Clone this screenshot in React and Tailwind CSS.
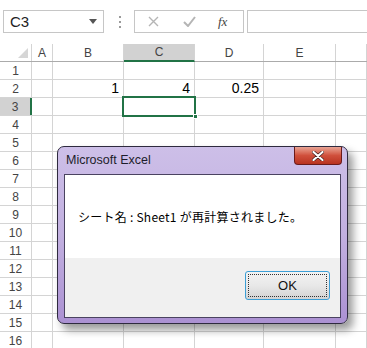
import React from 'react'

const COLS = [
  { name: 'A', w: 'w-[21px]' },
  { name: 'B', w: 'w-[71px]' },
  { name: 'C', w: 'w-[71px]' },
  { name: 'D', w: 'w-[69px]' },
  { name: 'E', w: 'w-[72px]' },
  { name: '', w: 'flex-1' },
]

const DATA = { 2: { B: '1', C: '4', D: '0.25' } }

const ROWS = Array.from({ length: 16 }, (_, i) => i + 1)

const FormulaBar = () => (
  <div className="relative h-[44px] flex items-start pt-[10px] pl-[3px]">
    <div className="w-[101px] h-[23px] border border-[#c6c6c6] flex items-center justify-between pl-[6px] pr-[6px]">
      <span className="text-[15px] text-[#222] leading-none">C3</span>
      <svg width="8" height="5" viewBox="0 0 8 5"><path d="M0 0h8L4 5z" fill="#555" /></svg>
    </div>
    <div className="ml-[15px] mt-[6px] flex flex-col gap-[3px]">
      <span className="w-[2px] h-[2px] bg-[#9a9a9a]" />
      <span className="w-[2px] h-[2px] bg-[#9a9a9a]" />
      <span className="w-[2px] h-[2px] bg-[#9a9a9a]" />
    </div>
    <div className="ml-[13px] w-[110px] h-[23px] border border-[#c6c6c6] flex items-center">
      <svg className="ml-[13px]" width="11" height="11" viewBox="0 0 11 11">
        <path d="M1 1L10 10M10 1L1 10" stroke="#b5b5b5" strokeWidth="1.4" />
      </svg>
      <svg className="ml-[24px]" width="13" height="11" viewBox="0 0 13 11">
        <path d="M1 6L5 10L12 1" stroke="#b5b5b5" strokeWidth="2" fill="none" />
      </svg>
      <span className="ml-[22px] text-[13px] italic text-[#444] leading-none" style={{ fontFamily: '"Liberation Serif", serif' }}>fx</span>
    </div>
    <div className="ml-[3px] flex-1 h-[23px] border border-r-0 border-[#c6c6c6]" />
  </div>
)

const Sheet = () => (
  <div className="relative">
    <div className="flex h-[18px] border-b border-[#ababab]">
      <div className="w-[32px] shrink-0 border-r border-[#d4d4d4] relative">
        <svg className="absolute right-[3px] bottom-[3px]" width="10" height="10" viewBox="0 0 10 10">
          <path d="M10 0V10H0z" fill="#d6d6d6" />
        </svg>
      </div>
      {COLS.map((c) => (
        <div
          key={c.name || 'F'}
          className={`${c.w} shrink-0 border-r border-[#d4d4d4] flex items-center justify-center text-[12px] text-[#444] ${
            c.name === 'C' ? 'bg-[#d2d2d2] border-b-2 border-b-[#217346] -mb-px' : ''
          }`}
        >
          {c.name}
        </div>
      ))}
    </div>
    {ROWS.map((r) => (
      <div key={r} className="flex h-[18px] border-b border-[#d4d4d4]">
        <div
          className={`w-[32px] shrink-0 flex items-center justify-center text-[12px] text-[#444] ${
            r === 3 ? 'bg-[#d2d2d2] border-r-2 border-r-[#217346]' : 'border-r border-[#d4d4d4]'
          }`}
        >
          {r}
        </div>
        {COLS.map((c) => (
          <div
            key={c.name || 'F'}
            className={`${c.w} shrink-0 border-r border-[#d4d4d4] flex items-end justify-end pr-[4px] text-[14px] leading-[17px] text-black`}
          >
            {DATA[r]?.[c.name] || ''}
          </div>
        ))}
      </div>
    ))}
    {/* selected cell C3 */}
    <div className="absolute left-[122px] top-[52px] w-[74px] h-[21px] border-2 border-[#217346]">
      <div className="absolute right-[-4px] bottom-[-4px] w-[5px] h-[5px] bg-[#217346] border border-white" />
    </div>
  </div>
)

const Dialog = () => (
  <div className="absolute left-[57px] top-[146px] w-[291px] h-[178px] rounded-[7px] border border-[#2e2a3e] bg-gradient-to-b from-[#cdbfe8] via-[#c2b0e0] to-[#ab91d2] shadow-[5px_6px_9px_rgba(0,0,0,0.4)] flex flex-col">
    <div className="h-[27px] relative flex items-center pl-[8px]">
      <span className="text-[12.5px] text-[#1d1d2b]" style={{ fontFamily: '"Liberation Sans", Arial, sans-serif' }}>
        Microsoft Excel
      </span>
      <div className="absolute right-[5px] top-0 w-[48px] h-[18px] rounded-b-[4px] border border-t-0 border-[#6b1a1a] bg-gradient-to-b from-[#e8a394] via-[#d0503c] to-[#b8321f] flex items-center justify-center">
        <svg width="12" height="10" viewBox="0 0 12 10">
          <path d="M1.5 1L10.5 9M10.5 1L1.5 9" stroke="#3a1a1a" strokeWidth="3.4" strokeLinecap="round" />
          <path d="M1.5 1L10.5 9M10.5 1L1.5 9" stroke="#ffffff" strokeWidth="2.2" strokeLinecap="round" />
        </svg>
      </div>
    </div>
    <div className="mx-[6px] h-[144px] border border-[#4a4360] flex flex-col">
      <div className="h-[83px] bg-white flex items-center pl-[13px]">
        <span className="text-[12px] tracking-[0.25px] text-black" style={{ fontFamily: '"Noto Sans CJK JP", "Noto Sans", sans-serif' }}>
          シート名 : Sheet1 が再計算されました。
        </span>
      </div>
      <div className="flex-1 bg-[#f0f0f0] flex justify-end items-start pt-[13px] pr-[10px]">
        <div className="w-[85px] h-[29px] rounded-[3px] border border-[#3c9fd6] p-[2px] bg-gradient-to-b from-[#f3f3f3] via-[#e8e8e8] to-[#d3d3d3]">
          <div className="w-full h-full border border-dotted border-[#333] flex items-center justify-center text-[13px] text-[#111]" style={{ fontFamily: '"Liberation Sans", Arial, sans-serif' }}>
            OK
          </div>
        </div>
      </div>
    </div>
  </div>
)

export default function App() {
  return (
    <div className="relative w-[367px] h-[348px] overflow-hidden bg-white" style={{ fontFamily: '"Liberation Sans", Arial, sans-serif' }}>
      <FormulaBar />
      <Sheet />
      <Dialog />
    </div>
  )
}
